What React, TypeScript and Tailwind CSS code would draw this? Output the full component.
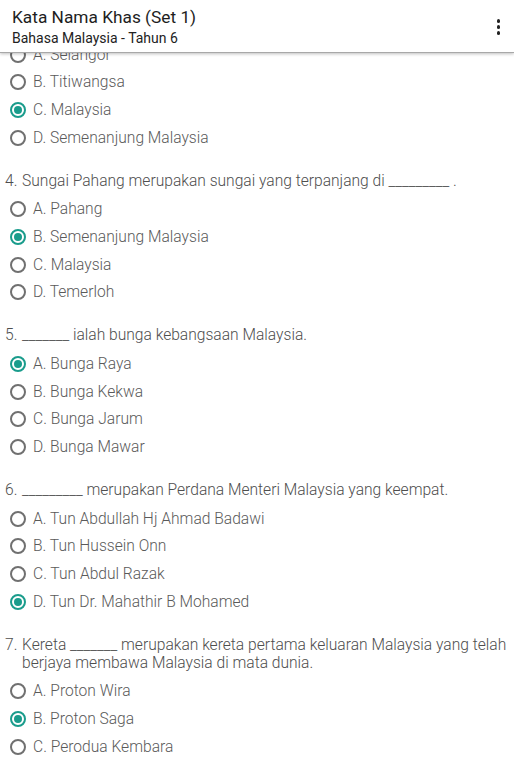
import React from "react";

type Q = { n?: string; text?: string; options: string[]; selected: number };

const questions: Q[] = [
  { options: ["A. Selangor", "B. Titiwangsa", "C. Malaysia", "D. Semenanjung Malaysia"], selected: 2 },
  {
    n: "4.",
    text: "Sungai Pahang merupakan sungai yang terpanjang di _________ .",
    options: ["A. Pahang", "B. Semenanjung Malaysia", "C. Malaysia", "D. Temerloh"],
    selected: 1,
  },
  {
    n: "5.",
    text: "_______ ialah bunga kebangsaan Malaysia.",
    options: ["A. Bunga Raya", "B. Bunga Kekwa", "C. Bunga Jarum", "D. Bunga Mawar"],
    selected: 0,
  },
  {
    n: "6.",
    text: "_________ merupakan Perdana Menteri Malaysia yang keempat.",
    options: [
      "A. Tun Abdullah Hj Ahmad Badawi",
      "B. Tun Hussein Onn",
      "C. Tun Abdul Razak",
      "D. Tun Dr. Mahathir B Mohamed",
    ],
    selected: 3,
  },
  {
    n: "7.",
    text: "Kereta _______ merupakan kereta pertama keluaran Malaysia yang telah berjaya membawa Malaysia di mata dunia.",
    options: ["A. Proton Wira", "B. Proton Saga", "C. Perodua Kembara"],
    selected: 1,
  },
];

function Radio({ checked }: { checked: boolean }) {
  return checked ? (
    <span className="flex h-[16px] w-[16px] shrink-0 items-center justify-center rounded-full border-2 border-[#1a9c8c]">
      <span className="h-[8px] w-[8px] rounded-full bg-[#1a9c8c]" />
    </span>
  ) : (
    <span className="h-[16px] w-[16px] shrink-0 rounded-full border-2 border-[#707070]" />
  );
}

export default function App() {
  return (
    <div
      className="flex h-[764px] w-[514px] flex-col overflow-hidden bg-white"
      style={{ fontFamily: "Roboto, 'Noto Sans', sans-serif" }}
    >
      <header className="relative z-10 flex h-[53px] shrink-0 items-center justify-between border-b border-[#a8a8a8] bg-white pl-[12px] pr-[14px] shadow-[0_1px_3px_rgba(0,0,0,0.25)]">
        <div className="flex flex-col">
          <div className="text-[17.3px] leading-[22px] text-[#1e1e1e]">Kata Nama Khas (Set 1)</div>
          <div className="mt-[1px] text-[14px] leading-[18px] text-[#222]">Bahasa Malaysia - Tahun 6</div>
        </div>
        <div className="flex flex-col items-center gap-[2.5px] pt-[2px]">
          <span className="h-[3.5px] w-[3.5px] rounded-full bg-[#222]" />
          <span className="h-[3.5px] w-[3.5px] rounded-full bg-[#222]" />
          <span className="h-[3.5px] w-[3.5px] rounded-full bg-[#222]" />
        </div>
      </header>
      <main className="-mt-[12px] flex flex-col font-light text-[15.6px] text-[#5a5a5a]">
        {questions.map((q, qi) => (
          <section key={qi} className="flex flex-col">
            {q.text && (
              <div className="mb-[6px] flex pl-[5px] pr-[3px] pt-[20px] leading-[18px] text-[#4e4e4e]">
                <span className="w-[17px] shrink-0">{q.n}</span>
                <span>{q.text}</span>
              </div>
            )}
            {q.options.map((o, oi) => (
              <div key={oi} className="flex h-[27.67px] items-center pl-[10px]">
                <Radio checked={oi === q.selected} />
                <span className="ml-[7px] leading-[18px]">{o}</span>
              </div>
            ))}
          </section>
        ))}
      </main>
    </div>
  );
}
